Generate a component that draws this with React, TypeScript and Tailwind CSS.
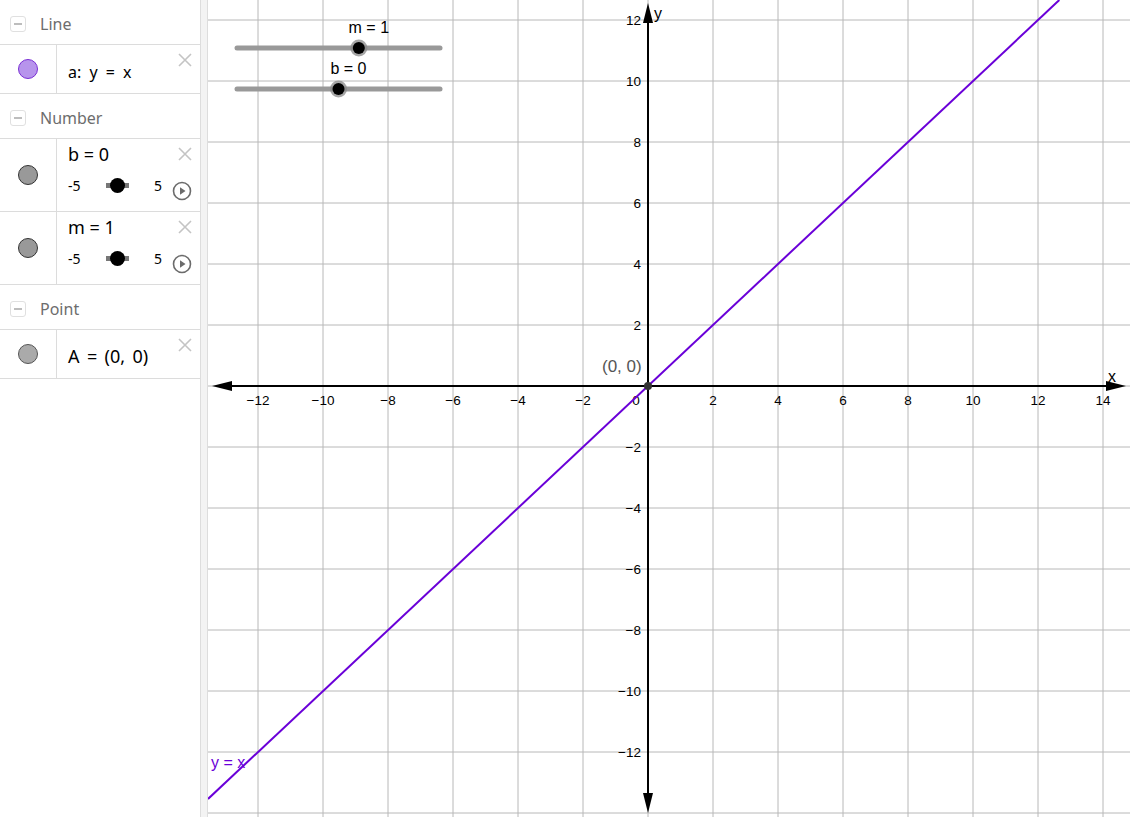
import React from "react";

// grid geometry (canvas coords, canvas starts at x=208)
const OX = 440;
const OY = 386;
const SX = 32.5; // px per unit on x
const SY = 30.5; // px per unit on y
const W = 922;
const H = 817;

const xTicks = [-12, -10, -8, -6, -4, -2, 2, 4, 6, 8, 10, 12, 14];
const yTicks = [12, 10, 8, 6, 4, 2, -2, -4, -6, -8, -10, -12];
const vLines = Array.from({ length: 14 }, (_, i) => OX + (i - 6) * 65);
const hLines = Array.from({ length: 14 }, (_, i) => OY + (i - 6) * 61);

const fmt = (n: number) => (n < 0 ? `\u2212${-n}` : `${n}`);

const MinusBox = () => (
  <span className="w-[16px] h-[16px] rounded-[3px] border border-[#e0e0e0] flex items-center justify-center">
    <span className="w-[8px] h-[1.5px] bg-[#bdbdbd]" />
  </span>
);

const CloseX = () => (
  <svg width="16" height="16" viewBox="0 0 16 16" className="absolute right-[7px] top-[7px]">
    <path d="M2 2 L14 14 M14 2 L2 14" stroke="#c4c4c4" strokeWidth="1.6" />
  </svg>
);

const PlayBtn = () => (
  <svg width="20" height="20" viewBox="0 0 20 20">
    <circle cx="10" cy="10" r="8.5" fill="none" stroke="#6b6b6b" strokeWidth="1.6" />
    <path d="M8 6.2 L13.5 10 L8 13.8 Z" fill="#6b6b6b" />
  </svg>
);

const Header = ({ label }: { label: string }) => (
  <div className="h-[45px] border-b border-[#dcdcdc] flex items-center gap-[14px] pl-[10px] pt-[4px]">
    <MinusBox />
    <span className="text-[16px] text-[#6d6d6d]">{label}</span>
  </div>
);

const Dot = ({ fill, stroke }: { fill: string; stroke: string }) => (
  <span
    className="w-[20px] h-[20px] rounded-full border-[1.5px]"
    style={{ backgroundColor: fill, borderColor: stroke }}
  />
);

const NumberRow = ({ name, value }: { name: string; value: number }) => (
  <div className="h-[73px] border-b border-[#dcdcdc] flex relative">
    <div className="w-[57px] border-r border-[#dcdcdc] flex items-center justify-center">
      <Dot fill="#999999" stroke="#333333" />
    </div>
    <div className="flex-1 pl-[11px] pt-[2px]">
      <div className="text-[18px] text-black leading-[26px]">
        {name} = {value}
      </div>
      <div className="flex items-center mt-[2px] text-[14px] text-black">
        <span className="w-[38px]">-5</span>
        <span className="relative w-[23px] h-[5px] bg-[#777] flex items-center justify-center">
          <span className="absolute w-[15px] h-[15px] rounded-full bg-black" />
        </span>
        <span className="ml-[25px]">5</span>
        <span className="ml-[10px] mt-[12px]">
          <PlayBtn />
        </span>
      </div>
    </div>
    <CloseX />
  </div>
);

const Sidebar = () => (
  <div className="w-[200px] shrink-0 flex flex-col bg-white font-['Noto_Sans',sans-serif]">
    <Header label="Line" />
    <div className="h-[49px] border-b border-[#dcdcdc] flex relative">
      <div className="w-[57px] border-r border-[#dcdcdc] flex items-center justify-center">
        <Dot fill="#b794ec" stroke="#7a2fd4" />
      </div>
      <div className="flex-1 pl-[11px] pt-[15px] text-[16px] text-black [word-spacing:0.25em]">a: y = x</div>
      <CloseX />
    </div>
    <Header label="Number" />
    <NumberRow name="b" value={0} />
    <NumberRow name="m" value={1} />
    <Header label="Point" />
    <div className="h-[49px] border-b border-[#dcdcdc] flex relative">
      <div className="w-[57px] border-r border-[#dcdcdc] flex items-center justify-center">
        <Dot fill="#aaaaaa" stroke="#555555" />
      </div>
      <div className="flex-1 pl-[11px] pt-[13px] text-[18px] text-black [word-spacing:0.15em]">A = (0, 0)</div>
      <CloseX />
    </div>
  </div>
);

const Slider = ({ y, pos, label }: { y: number; pos: number; label: string }) => {
  const x = 29 + ((pos + 5) / 10) * 203;
  return (
    <g>
      <line x1="29" y1={y} x2="232" y2={y} stroke="#999" strokeWidth="5" strokeLinecap="round" />
      <circle cx={x} cy={y} r="8.5" fill="#888" opacity="0.75" />
      <circle cx={x} cy={y} r="6" fill="#000" />
      <text x={x + 10} y={y - 15} fontSize="16" textAnchor="middle" fill="#000">
        {label}
      </text>
    </g>
  );
};

const Graph = () => {
  const xl = -OX / SX;
  const yl = xl;
  const yTop = OY / SY;
  return (
    <svg width={W} height={H} className="block" fontFamily="'Liberation Sans', Arial, sans-serif">
      <rect width={W} height={H} fill="#fff" />
      {vLines.map((x) => (
        <line key={"v" + x} x1={x} y1="0" x2={x} y2={H} stroke="#b8b8b8" strokeWidth="1" />
      ))}
      {hLines.map((y) => (
        <line key={"h" + y} x1="0" y1={y} x2={W} y2={y} stroke="#b8b8b8" strokeWidth="1" />
      ))}
      {/* axes */}
      <line x1="18" y1={OY} x2="905" y2={OY} stroke="#000" strokeWidth="2" />
      <path d={`M4 ${OY} L24 ${OY - 5} L24 ${OY + 5} Z`} fill="#000" />
      <path d={`M918 ${OY} L898 ${OY - 5} L898 ${OY + 5} Z`} fill="#000" />
      <line x1={OX} y1="18" x2={OX} y2="800" stroke="#000" strokeWidth="2" />
      <path d={`M${OX} 3 L${OX - 5} 23 L${OX + 5} 23 Z`} fill="#000" />
      <path d={`M${OX} 813 L${OX - 5} 793 L${OX + 5} 793 Z`} fill="#000" />
      <text x="900" y="382" fontSize="16" fill="#000">x</text>
      <text x="446" y="19" fontSize="16" fill="#000">y</text>
      {xTicks.map((t) => (
        <text key={"xt" + t} x={OX + t * SX} y={OY + 19} fontSize="13.5" textAnchor="middle" fill="#000">
          {fmt(t)}
        </text>
      ))}
      <text x={OX - 12} y={OY + 19} fontSize="13.5" textAnchor="middle" fill="#000">0</text>
      {yTicks.map((t) => (
        <text key={"yt" + t} x={OX - 7} y={OY - t * SY + 5} fontSize="13.5" textAnchor="end" fill="#000">
          {fmt(t)}
        </text>
      ))}
      {/* line y = x */}
      <line
        x1={OX + xl * SX}
        y1={OY - yl * SY}
        x2={OX + yTop * SX}
        y2={OY - yTop * SY}
        stroke="#6a00d8"
        strokeWidth="2"
      />
      <text x="3" y="768" fontSize="16" fill="#6a00d8">y = x</text>
      {/* point A */}
      <circle cx={OX} cy={OY} r="4" fill="#333" />
      <text x="394" y="372" fontSize="17" fill="#555">(0, 0)</text>
      <Slider y={48} pos={1} label="m = 1" />
      <Slider y={89} pos={0} label="b = 0" />
    </svg>
  );
};

export default function App() {
  return (
    <div className="w-[1130px] h-[817px] flex overflow-hidden bg-white">
      <Sidebar />
      <div className="w-[8px] shrink-0 bg-[#f3f3f3] border-l border-r border-[#dddddd]" />
      <div className="flex-1 overflow-hidden">
        <Graph />
      </div>
    </div>
  );
}
